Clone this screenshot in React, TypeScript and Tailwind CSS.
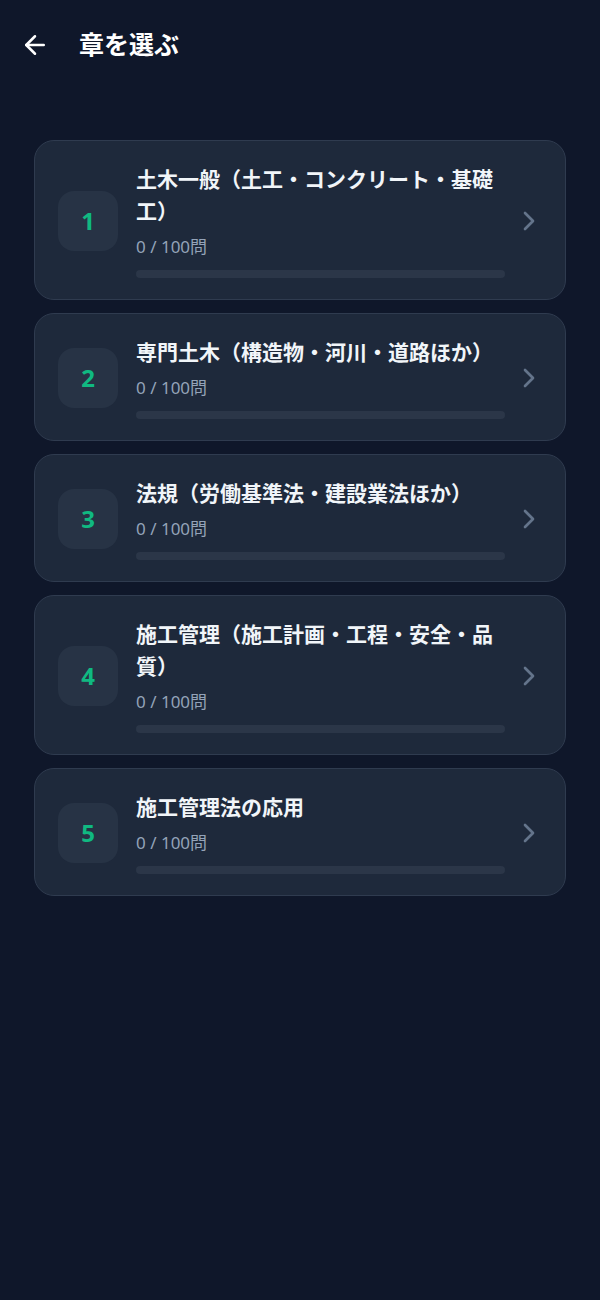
import { ArrowLeft, ChevronRight } from "lucide-react";

const chapters = [
  { no: 1, title: "土木一般（土工・コンクリート・基礎工）", done: 0, total: 100 },
  { no: 2, title: "専門土木（構造物・河川・道路ほか）", done: 0, total: 100 },
  { no: 3, title: "法規（労働基準法・建設業法ほか）", done: 0, total: 100 },
  { no: 4, title: "施工管理（施工計画・工程・安全・品質）", done: 0, total: 100 },
  { no: 5, title: "施工管理法の応用", done: 0, total: 100 },
];

function ChapterCard({ no, title, done, total }: (typeof chapters)[number]) {
  return (
    <button className="w-full flex items-center pl-[23px] pr-5 pt-[22px] pb-[21px] rounded-[20px] bg-[#1e293b] border border-[#2f3b4f] text-left">
      {/* Number */}
      <div className="w-[60px] h-[60px] mr-[18px] shrink-0 rounded-2xl bg-[#273345] flex items-center justify-center text-2xl font-bold text-[#10b981]">
        {no}
      </div>

      {/* Title, count, progress */}
      <div className="flex-1 min-w-0">
        <div className="text-[21px] leading-8 font-bold text-[#f1f5f9]">{title}</div>
        <div className="mt-2 text-[17px] leading-6 text-[#94a3b8]">
          {done} / {total}問
        </div>
        <div className="mt-[11px] h-2 rounded-full bg-[#2b3648] overflow-hidden">
          <div className="h-full bg-[#10b981]" style={{ width: `${(done / total) * 100}%` }} />
        </div>
      </div>

      <ChevronRight size={32} strokeWidth={2} className="ml-2 shrink-0 text-[#64748b]" />
    </button>
  );
}

export default function App() {
  return (
    <div
      className="min-h-[1300px] bg-[#0f172a]"
      style={{ fontFamily: '"Noto Sans", "Noto Sans CJK JP", sans-serif' }}
    >
      {/* Header */}
      <div className="h-[90px] flex items-center pl-5 gap-[29px]">
        <ArrowLeft size={30} strokeWidth={2} className="text-white" />
        <h1 className="text-[25px] font-bold text-white">章を選ぶ</h1>
      </div>

      {/* Chapter list */}
      <div className="px-[34px] pt-[50px] flex flex-col gap-[13px]">
        {chapters.map((c) => (
          <ChapterCard key={c.no} {...c} />
        ))}
      </div>
    </div>
  );
}
